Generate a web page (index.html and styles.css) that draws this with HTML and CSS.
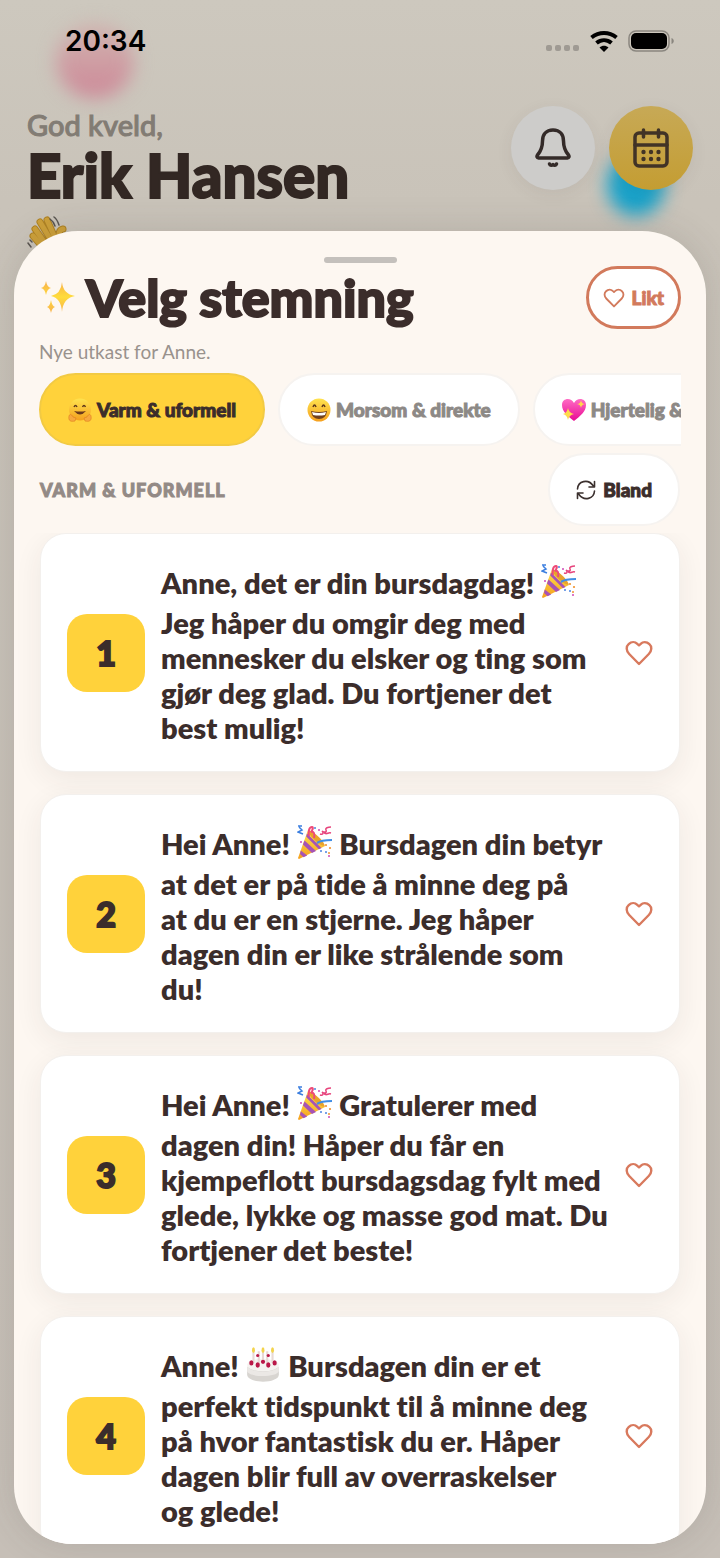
FILE: index.html
```html
<!DOCTYPE html>
<html lang="no">
<head>
    <meta charset="UTF-8">
    <meta name="viewport" content="width=device-width, initial-scale=1.0">
    <title>Velg stemning</title>
    <link rel="stylesheet" href="styles.css">
</head>
<body>
    <!-- Shared icons -->
    <svg class="sprite" width="0" height="0" aria-hidden="true">
        <defs>
            <linearGradient id="gold" x1="0" y1="0" x2="0" y2="1">
                <stop offset="0" stop-color="#ffe34f"/>
                <stop offset="1" stop-color="#f5a01e"/>
            </linearGradient>
            <linearGradient id="sparkle" x1="0" y1="0" x2="0" y2="1">
                <stop offset="0" stop-color="#f8b04c"/>
                <stop offset="0.5" stop-color="#ffdc3c"/>
                <stop offset="1" stop-color="#f8b04c"/>
            </linearGradient>
            <linearGradient id="pink" x1="0" y1="0" x2="0" y2="1">
                <stop offset="0" stop-color="#ff6bc4"/>
                <stop offset="1" stop-color="#e80a93"/>
            </linearGradient>
            <symbol id="heart" viewBox="0 0 28 26">
                <path d="M14 24 4.200 14C1 10.800 1 6.500 3.600 4.200 6.500 1.300 10.200 1.700 12.300 3.800L14 5.300l1.700-1.500c2.100-2.100 5.800-2.500 8.700.4 2.600 2.300 2.600 6.600-.6 9.800z" fill="none" stroke="currentColor" stroke-width="2.4" stroke-linejoin="round"/>
            </symbol>
            <symbol id="party" viewBox="0 0 36 36">
                <path d="M11 5 28 21 2 34q-1 0-.8-1.500z" fill="url(#gold)"/>
                <path d="M7.500 15.500 19 26l-4 2L6 19.500zM3.800 25.500l6.400 5-3.600 1.800-3.600-3.200zM10 8.500 24.500 23l-2.600 1.200L9.200 11.500z" fill="#a653b5"/>
                <path d="M11 5c4 .5 14 8 17 15.500-4 1.500-17-10-17-15.500z" fill="#e8a32c"/>
                <path d="M2 2l3 3-4 2 5 2M1 1h4" fill="none" stroke="#3c7fe0" stroke-width="1.500"/>
                <path d="M12 11c-1-4 0-9 3-9 2 0 0 4-1 5 3-1 4 2 3 6" fill="none" stroke="#ee4a78" stroke-width="2"/>
                <path d="M23 9c3 1 4-1 2-3 3 2 5 1 4-1s2-3 5-3M27 8c3 2 4-1 7 0" fill="none" stroke="#e7447c" stroke-width="1.500"/>
                <path d="M20 18c4-3 9-3 15-3" fill="none" stroke="#418ee5" stroke-width="2.200"/>
                <g fill="#f0932e"><circle cx="33" cy="23" r="1.100"/><circle cx="29" cy="20" r="1.100"/><circle cx="32" cy="28" r="1"/></g>
                <g fill="#4a83e0"><circle cx="24" cy="26" r="1"/><circle cx="18" cy="3" r="1"/><circle cx="29" cy="27" r="1"/></g>
                <g fill="#cf4ab8"><circle cx="32" cy="31" r="1"/><circle cx="4" cy="17" r="1"/><circle cx="22" cy="5" r="1"/></g>
            </symbol>
            <symbol id="cake" viewBox="0 0 32 34">
                <path d="M1 19v7c0 9 30 9 30 0v-7z" fill="#d8d5d1"/>
                <ellipse cx="16" cy="17" rx="15" ry="6" fill="#f5f3f0"/>
                <path d="M1 18v5c2 6 28 6 30 0v-5c-3 7-27 7-30 0z" fill="#ebe8e5"/>
                <path d="M7 4v11M12 4v13M16 3v9M20 4v13M25 4v11" stroke="#e8d9d5" stroke-width="2"/>
                <g fill="#ba1848"><ellipse cx="5" cy="15" rx="2" ry="2.500"/><ellipse cx="11" cy="17" rx="2" ry="2.500"/><ellipse cx="21" cy="17" rx="2" ry="2.500"/><ellipse cx="27" cy="15" rx="2" ry="2.500"/><circle cx="11" cy="8" r="1.500"/><circle cx="21" cy="8" r="1.500"/><circle cx="16" cy="14" r="2"/></g>
                <g fill="#f3d34c"><ellipse cx="7" cy="3" rx="1.400" ry="2.700"/><ellipse cx="16" cy="3" rx="1.400" ry="2.700"/><ellipse cx="25" cy="3" rx="1.400" ry="2.700"/></g>
            </symbol>
        </defs>
    </svg>

    <div class="app">
        <header class="home">
            <div class="blob blob-pink"></div>
            <div class="blob blob-blue"></div>
            <div class="status-bar">
                <span>20:34</span>
                <div class="status-icons">
                    <svg width="34" height="6" viewBox="0 0 34 6" fill="#9f9a93"><rect width="6" height="6" rx="2"/><rect x="9" width="6" height="6" rx="2"/><rect x="18" width="6" height="6" rx="2"/><rect x="27" width="6" height="6" rx="2"/></svg>
                    <svg class="wifi" width="28" height="21" viewBox="0 0 28 21">
                        <path d="M1.500 6.500C9 .5 19 .5 26.500 6.500M6.500 12c4.500-3.800 10.500-3.800 15 0" fill="none" stroke="#000" stroke-width="4"/>
                        <path d="M9.500 16.500c2.800-2.200 6.200-2.200 9 0L14 21z"/>
                    </svg>
                    <svg class="battery" width="46" height="22" viewBox="0 0 46 22">
                        <rect x="1" y="1" width="40" height="20" rx="7" fill="none" stroke="#8a867f" stroke-width="1.500"/>
                        <rect x="3" y="3" width="36" height="16" rx="5"/>
                        <path d="M43.500 8c3 1 3 5 0 6z" fill="#8a867f"/>
                    </svg>
                </div>
            </div>
            <div class="greeting">
                <div>
                    <p class="hello">God kveld,</p>
                    <h1 class="name">Erik Hansen</h1>
                </div>
                <div class="actions">
                    <button class="round-button" type="button" aria-label="Varsler">
                        <svg width="36" height="40" viewBox="0 0 36 40" fill="none" stroke="#332a28" stroke-width="3.500" stroke-linecap="round" stroke-linejoin="round">
                            <path d="M18 2C11 2 7.500 7 7.500 13c0 7-1.500 10-5 14-1 1.500-.5 3 1 3h29c1.500 0 2-1.500 1-3-3.500-4-5-7-5-14C28.500 7 25 2 18 2z"/>
                            <path d="M14.500 36c.5 1.500 2.500 1.500 3.500.5 1 1 3 1 3.500-.5"/>
                        </svg>
                    </button>
                    <button class="round-button round-button-gold" type="button" aria-label="Kalender">
                        <svg width="36" height="40" viewBox="0 0 36 40" fill="none" stroke="#413326" stroke-width="3.500" stroke-linecap="round">
                            <rect x="2" y="5" width="32" height="33" rx="4"/>
                            <path d="M2 17h32M10.500 2v7M25.500 2v7"/>
                            <g fill="#413326" stroke="none"><circle cx="10.500" cy="24" r="2.200"/><circle cx="18" cy="24" r="2.200"/><circle cx="25.500" cy="24" r="2.200"/><circle cx="10.500" cy="31" r="2.200"/><circle cx="18" cy="31" r="2.200"/><circle cx="25.500" cy="31" r="2.200"/></g>
                        </svg>
                    </button>
                </div>
            </div>
            <svg class="wave" width="40" height="40" viewBox="0 0 40 40">
                <g fill="none" stroke-linecap="round">
                    <path d="M8 13 20 30M13 6l12 20M20 4l9 20M6 20l12 14M36 13c-5 1-4 6-4 13" stroke="#ae8224" stroke-width="7"/>
                    <path d="M8 13 20 30M13 6l12 20M20 4l9 20M6 20l12 14M36 13c-5 1-4 6-4 13" stroke="#cda039" stroke-width="5"/>
                    <path d="M23 3c3 2 4 4 5 7M27 1c3 2 4 5 5 8M1 27l3 4M3 24l2 2" stroke="#595450" stroke-width="1.500"/>
                </g>
            </svg>
        </header>

        <main class="sheet">
            <div class="handle"></div>
            <div class="sheet-header">
                <h2 class="title">
                    <svg width="36" height="36" viewBox="0 0 36 36" fill="url(#sparkle)"><path d="M22 2q1 12 13 14-12 2-13 16-1-14-11-16 10-2 11-14zM6 1q1 6 5 7-4 1-5 7-1-6-5-7 4-1 5-7zM11 20q1 6 4 7-3 1-4 6-1-5-4-6 3-1 4-7z"/></svg>
                    Velg stemning
                </h2>
                <button class="liked" type="button"><svg width="22" height="20"><use href="#heart"/></svg>Likt</button>
            </div>
            <p class="subtitle">Nye utkast for Anne.</p>

            <div class="moods">
                <button class="mood mood-active" type="button">
                    <svg width="24" height="24" viewBox="0 0 24 24"><circle cx="12" cy="11.500" r="11" fill="url(#gold)"/><path d="M6 9q1.500-3 3 0M14.500 9q1.500-3 3 0" fill="none" stroke="#5f391b" stroke-width="1.500"/><path d="M6 13q6 7 12 0-6 1-12 0z" fill="#6b3a1c"/><path d="M1 18c1-3 3-1 4 1l3 1-1 3c-4 1-7 0-6-5zM23 18c-1-3-3-1-4 1l-3 1 1 3c4 1 7 0 6-5z" fill="#f7a83d" stroke="#df7c22" stroke-width=".6"/></svg>
                    Varm &amp; uformell
                </button>
                <button class="mood" type="button">
                    <svg width="24" height="24" viewBox="0 0 24 24"><circle cx="12" cy="12" r="11.500" fill="url(#gold)"/><path d="M6 9q1.500-4 3 0M15 9q1.500-4 3 0" fill="none" stroke="#5f391b" stroke-width="1.500"/><path d="M4 13q8 2 16 0-1 8-8 8t-8-8z" fill="#70401e"/><path d="M5 14q7 2 14 0l-1 3q-6 1-12 0z" fill="#fff"/></svg>
                    Morsom &amp; direkte
                </button>
                <button class="mood" type="button">
                    <svg width="24" height="24" viewBox="0 0 24 24"><path d="M12 23C6 18 0 14 0 7 0 0 9-1 12 5c3-6 12-5 12 2 0 7-6 11-12 16z" fill="url(#pink)"/><path d="M19 2q.5 4 4 4-3.500.5-4 4-.5-3.500-4-4 3.500 0 4-4zM6 10q1 5 6 6-5 1-6 6-1-5-5-6 4-1 5-6z" fill="#ffd94c"/></svg>
                    Hjertelig &amp; varm
                </button>
            </div>

            <div class="section-row">
                <h3 class="section-title">VARM &amp; UFORMELL</h3>
                <button class="shuffle" type="button">
                    <svg width="20" height="20" viewBox="0 0 20 20" fill="none" stroke="#3b302e" stroke-width="1.600" stroke-linecap="round" stroke-linejoin="round"><path d="M1.500 9C2 1 12-1.500 17 5.500M18.500 1.500v5.500H13M18.500 11C18 19 8 21.500 3 14.500M1.500 18.500V13H7"/></svg>
                    Bland
                </button>
            </div>

            <ol class="drafts">
                <li class="draft">
                    <span class="number">1</span>
                    <p class="message">Anne, det er din bursdagdag! <svg class="emoji" role="img" aria-label="konfetti"><use href="#party"/></svg><br>Jeg håper du omgir deg med<br>mennesker du elsker og ting som<br>gjør deg glad. Du fortjener det<br>best mulig!</p>
                    <button class="like" type="button" aria-label="Lik"><svg width="28" height="26"><use href="#heart"/></svg></button>
                </li>
                <li class="draft">
                    <span class="number">2</span>
                    <p class="message">Hei Anne! <svg class="emoji" role="img" aria-label="konfetti"><use href="#party"/></svg> Bursdagen din betyr<br>at det er på tide å minne deg på<br>at du er en stjerne. Jeg håper<br>dagen din er like strålende som<br>du!</p>
                    <button class="like" type="button" aria-label="Lik"><svg width="28" height="26"><use href="#heart"/></svg></button>
                </li>
                <li class="draft">
                    <span class="number">3</span>
                    <p class="message">Hei Anne! <svg class="emoji" role="img" aria-label="konfetti"><use href="#party"/></svg> Gratulerer med<br>dagen din! Håper du får en<br>kjempeflott bursdagsdag fylt med<br>glede, lykke og masse god mat. Du<br>fortjener det beste!</p>
                    <button class="like" type="button" aria-label="Lik"><svg width="28" height="26"><use href="#heart"/></svg></button>
                </li>
                <li class="draft">
                    <span class="number">4</span>
                    <p class="message">Anne! <svg class="emoji" role="img" aria-label="kake"><use href="#cake"/></svg> Bursdagen din er et<br>perfekt tidspunkt til å minne deg<br>på hvor fantastisk du er. Håper<br>dagen blir full av overraskelser<br>og glede!</p>
                    <button class="like" type="button" aria-label="Lik"><svg width="28" height="26"><use href="#heart"/></svg></button>
                </li>
            </ol>
        </main>
    </div>
</body>
</html>
```

FILE: styles.css
```css
* {
    box-sizing: border-box;
}

body {
    margin: 0;
    font-family: Lato, "Open Sans", sans-serif;
    font-variant-ligatures: none;
    color: #3b2d2b;
    background-color: #c9c3b9;
}

h1, h2, h3, p, ol {
    margin: 0;
    padding: 0;
}

button {
    font-family: inherit;
    color: inherit;
    cursor: pointer;
}

svg {
    flex-shrink: 0;
}

.sprite {
    position: absolute;
}

.app {
    display: flex;
    flex-direction: column;
    height: 100vh;
    overflow: hidden;
    background: linear-gradient(#cdc8be, #c9c3b9 200px, #c6bfb7);
}

/* Home screen behind the sheet */
.home {
    position: relative;
    padding: 24px 27px 0;
}

.status-bar {
    position: relative;
    display: flex;
    justify-content: space-between;
    align-items: center;
    height: 34px;
    padding: 0 19px 0 38px;
    font: 600 28px/34px Inter, sans-serif;
    color: #000;
}

.status-icons {
    display: flex;
    align-items: center;
    gap: 10px;
}

.status-icons svg:first-child {
    margin-top: 14px;
}

.greeting {
    position: relative;
    display: flex;
    justify-content: space-between;
    padding-top: 48px;
}

.hello {
    padding-top: 2px;
    font-size: 29px;
    font-weight: 500;
    line-height: 34px;
    color: #827c74;
    -webkit-text-stroke: 1px #827c74;
}

.name {
    font-size: 60px;
    font-weight: 900;
    line-height: 66px;
    color: #322723;
    -webkit-text-stroke: 2px #322723;
}

.actions {
    display: flex;
    gap: 14px;
}

.round-button {
    display: flex;
    align-items: center;
    justify-content: center;
    width: 84px;
    height: 84px;
    border: none;
    border-radius: 50%;
    background-color: #cdccca;
    box-shadow: 0 4px 16px rgba(80, 65, 60, 0.08);
}

.round-button-gold {
    background: linear-gradient(#c7a956, #c49d32);
}

.blob {
    position: absolute;
    border-radius: 50%;
    filter: blur(9px);
}

.blob-pink {
    top: 24px;
    left: 56px;
    width: 78px;
    height: 74px;
    background: linear-gradient(#d0b5b0, #cd8797);
}

.blob-blue {
    top: 154px;
    right: 55px;
    width: 58px;
    height: 62px;
    background-color: #17a2ca;
}

.wave {
    display: block;
    margin-top: 8px;
}

/* Bottom sheet */
.sheet {
    position: relative;
    flex: 1;
    min-height: 0;
    display: flex;
    flex-direction: column;
    margin: -25px 14px 14px;
    padding: 26px 0 0;
    border-radius: 64px 64px 58px 58px;
    overflow: hidden;
    background-color: #fdf7f1;
    box-shadow: 0 0 36px rgba(70, 65, 65, 0.16);
}

.handle {
    align-self: center;
    width: 73px;
    height: 6px;
    border-radius: 3px;
    background-color: #c4c0bc;
}

.sheet-header {
    display: flex;
    align-items: center;
    justify-content: space-between;
    margin-top: 3px;
    padding: 0 25px 0 26px;
}

.title {
    display: flex;
    align-items: center;
    gap: 10px;
    font-size: 52px;
    font-weight: 900;
    line-height: 63px;
    -webkit-text-stroke: 2px #3b2d2b;
}

.liked {
    display: flex;
    align-items: center;
    justify-content: center;
    gap: 7px;
    height: 63px;
    padding: 0 14px;
    border: 3px solid #d27a5c;
    border-radius: 32px;
    background-color: #fff;
    font-size: 19px;
    font-weight: 900;
    color: #d27a5c;
    -webkit-text-stroke: 1px #d27a5c;
}

.subtitle {
    padding: 10px 25px 8px;
    font-size: 19px;
    line-height: 26px;
    color: #99928d;
}

.moods {
    display: flex;
    gap: 13px;
    margin: 0 25px;
    overflow: hidden;
}

.mood {
    display: flex;
    align-items: center;
    flex-shrink: 0;
    gap: 5px;
    height: 73px;
    padding: 0 27px;
    border: 2px solid #f6f3f0;
    border-radius: 37px;
    background-color: #fff;
    font-size: 19px;
    font-weight: 900;
    color: #8d8986;
    -webkit-text-stroke: 1px currentColor;
}

.mood-active {
    border-color: #f2ca43;
    background-color: #ffd23b;
    color: #3b2d2b;
}

.section-row {
    display: flex;
    align-items: center;
    justify-content: space-between;
    padding: 7px 26px;
}

.section-title {
    font-size: 18px;
    font-weight: 900;
    letter-spacing: 1px;
    color: #938a86;
    -webkit-text-stroke: 1px #938a86;
}

.shuffle {
    display: flex;
    align-items: center;
    gap: 7px;
    height: 73px;
    padding: 0 26px;
    border: 2px solid #f6f3f0;
    border-radius: 37px;
    background-color: #fff;
    font-size: 19px;
    font-weight: 900;
    -webkit-text-stroke: 1px currentColor;
}

.drafts {
    display: flex;
    flex-direction: column;
    gap: 22px;
    flex: 1;
    min-height: 0;
    padding: 0 26px;
    overflow: hidden;
    list-style: none;
}

.draft {
    display: flex;
    align-items: center;
    flex-shrink: 0;
    gap: 16px;
    padding: 26px;
    border: 1px solid #f3f0ed;
    border-radius: 26px;
    background-color: #fff;
    box-shadow: 0 8px 28px rgba(60, 45, 43, 0.07);
}

.number {
    display: flex;
    align-items: center;
    justify-content: center;
    flex-shrink: 0;
    width: 78px;
    height: 78px;
    border-radius: 20px;
    background-color: #ffd23b;
    font-size: 34px;
    font-weight: 900;
    -webkit-text-stroke: 2px #3b2d2b;
}

.message {
    flex: 1;
    font-size: 29px;
    font-weight: 800;
    line-height: 35px;
    white-space: nowrap;
}

.emoji {
    width: 36px;
    height: 36px;
    margin: 4px 0 5px;
    vertical-align: -11px;
}

.like {
    display: flex;
    padding: 0;
    border: none;
    background: none;
    color: #d8795d;
}
```
